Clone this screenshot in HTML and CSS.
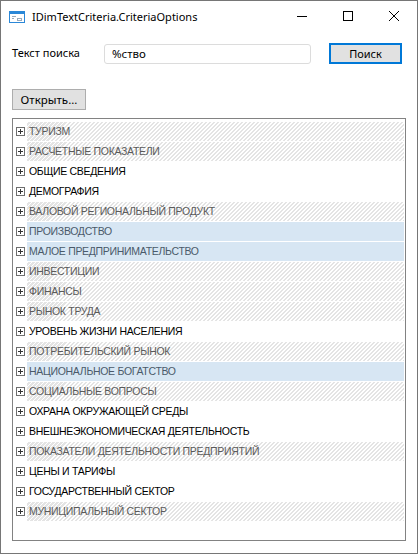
FILE: index.html
```html
<!DOCTYPE html>
<html lang="ru">
<head>
    <meta charset="UTF-8">
    <title>IDimTextCriteria.CriteriaOptions</title>
    <link rel="stylesheet" href="styles.css">
</head>
<body>
    <div class="window">
        <div class="titlebar">
            <svg class="app-icon" width="16" height="12" viewBox="0 0 16 12">
                <rect x="0.5" y="0.5" width="15" height="11" fill="#fff" stroke="#2b88d8"/>
                <rect x="0" y="0" width="16" height="3" fill="#2b88d8"/>
                <rect x="3" y="5" width="4" height="1" fill="#9ab"/>
                <rect x="3" y="7" width="2" height="1" fill="#9ab"/>
                <rect x="8.5" y="7.5" width="4" height="2" fill="none" stroke="#9ab"/>
            </svg>
            <span class="title">IDimTextCriteria.CriteriaOptions</span>
            <div class="controls">
                <span class="ctl">
                    <svg width="12" height="12" viewBox="0 0 12 12"><path d="M1 6.5h10" stroke="#000" stroke-width="1"/></svg>
                </span>
                <span class="ctl">
                    <svg width="12" height="12" viewBox="0 0 12 12"><rect x="1.5" y="1.5" width="9" height="9" fill="none" stroke="#000"/></svg>
                </span>
                <span class="ctl">
                    <svg width="12" height="12" viewBox="0 0 12 12"><path d="M1 1l10 10M11 1L1 11" stroke="#000" stroke-width="1"/></svg>
                </span>
            </div>
        </div>

        <div class="content">
            <div class="search-row">
                <label for="query">Текст поиска</label>
                <input type="text" id="query" value="%ство">
                <button class="btn btn-default">Поиск</button>
            </div>

            <button class="btn btn-open">Открыть...</button>

            <div class="tree" id="tree"></div>
        </div>
    </div>

    <script>
        // s = striped (not loaded), w = plain, b = highlighted
        const items = [
            ['ТУРИЗМ', 's'],
            ['РАСЧЕТНЫЕ ПОКАЗАТЕЛИ', 's'],
            ['ОБЩИЕ СВЕДЕНИЯ', 'w'],
            ['ДЕМОГРАФИЯ', 'w'],
            ['ВАЛОВОЙ РЕГИОНАЛЬНЫЙ ПРОДУКТ', 's'],
            ['ПРОИЗВОДСТВО', 'b'],
            ['МАЛОЕ ПРЕДПРИНИМАТЕЛЬСТВО', 'b'],
            ['ИНВЕСТИЦИИ', 's'],
            ['ФИНАНСЫ', 's'],
            ['РЫНОК ТРУДА', 's'],
            ['УРОВЕНЬ ЖИЗНИ НАСЕЛЕНИЯ', 'w'],
            ['ПОТРЕБИТЕЛЬСКИЙ РЫНОК', 's'],
            ['НАЦИОНАЛЬНОЕ БОГАТСТВО', 'b'],
            ['СОЦИАЛЬНЫЕ ВОПРОСЫ', 's'],
            ['ОХРАНА ОКРУЖАЮЩЕЙ СРЕДЫ', 'w'],
            ['ВНЕШНЕЭКОНОМИЧЕСКАЯ ДЕЯТЕЛЬНОСТЬ', 'w'],
            ['ПОКАЗАТЕЛИ ДЕЯТЕЛЬНОСТИ ПРЕДПРИЯТИЙ', 's'],
            ['ЦЕНЫ И ТАРИФЫ', 'w'],
            ['ГОСУДАРСТВЕННЫЙ СЕКТОР', 'w'],
            ['МУНИЦИПАЛЬНЫЙ СЕКТОР', 's']
        ];

        const tree = document.getElementById('tree');
        items.forEach(item => {
            const row = document.createElement('div');
            row.className = 'node';
            row.innerHTML = '<span class="expander"></span><span class="label ' + item[1] + '">' + item[0] + '</span>';
            tree.appendChild(row);
        });
    </script>
</body>
</html>
```

FILE: styles.css
```css
body {
    margin: 0;
    padding: 0;
    background: #fff;
    font-family: "Noto Sans", "Open Sans", sans-serif;
}
.window {
    width: 418px;
    height: 554px;
    box-sizing: border-box;
    border: 1px solid #767676;
    background: #fff;
    display: flex;
    flex-direction: column;
}
.titlebar {
    height: 30px;
    display: flex;
    align-items: center;
}
.app-icon {
    margin: 1px 0 0 8px;
}
.title {
    margin-left: 7px;
    font-size: 11px;
    color: #000;
}
.controls {
    margin-left: auto;
    display: flex;
    align-self: stretch;
}
.ctl {
    width: 46px;
    display: flex;
    align-items: center;
    justify-content: center;
}
.content {
    padding: 12px 10px 0 11px;
    font-size: 12px;
}
.search-row {
    display: flex;
    align-items: center;
    height: 21px;
}
.search-row label {
    width: 92px;
    padding-bottom: 2px;
    font-size: 11px;
}
.search-row input {
    width: 207px;
    height: 20px;
    box-sizing: border-box;
    margin: 0;
    padding: 0 7px;
    border: 1px solid #dcdcdc;
    border-radius: 3px;
    font-family: inherit;
    font-size: 11.5px;
    color: #000;
    outline: none;
}
.btn {
    box-sizing: border-box;
    margin: 0;
    padding: 0;
    background: #e1e1e1;
    border: 1px solid #adadad;
    font-family: inherit;
    font-size: 12px;
    color: #000;
}
.btn-default {
    margin-left: 18px;
    width: 73px;
    height: 21px;
    border: 2px solid #0078d7;
    font-size: 11px;
}
.btn-open {
    margin-top: 25px;
    width: 74px;
    height: 21px;
    display: block;
    font-size: 11.5px;
}
.tree {
    margin-top: 8px;
    width: 394px;
    height: 423px;
    box-sizing: border-box;
    border: 1px solid #828282;
    padding: 3px 1px 0 3px;
    font-family: "Liberation Sans", Arial, sans-serif;
    font-size: 10.5px;
    letter-spacing: -0.3px;
}
.node {
    height: 20px;
    display: flex;
}
.expander {
    width: 9px;
    height: 9px;
    margin: 5px 2px 0 0;
    box-sizing: border-box;
    border: 1px solid #6e6e6e;
    position: relative;
    flex: none;
}
.expander::before,
.expander::after {
    content: "";
    position: absolute;
    background: #333;
}
.expander::before {
    left: 1px;
    top: 3px;
    width: 5px;
    height: 1px;
}
.expander::after {
    left: 3px;
    top: 1px;
    width: 1px;
    height: 5px;
}
.label {
    flex: 1;
    height: 19px;
    line-height: 19px;
    padding-left: 2px;
    white-space: nowrap;
}
.label.w {
    color: #000;
}
.label.s {
    color: #5a5a5a;
    background: repeating-linear-gradient(135deg, #fff 0, #fff 1.4px, #e4e4e4 1.4px, #e4e4e4 2.83px);
}
.label.b {
    color: #4a5a6a;
    background: #d7e6f3;
}
```
